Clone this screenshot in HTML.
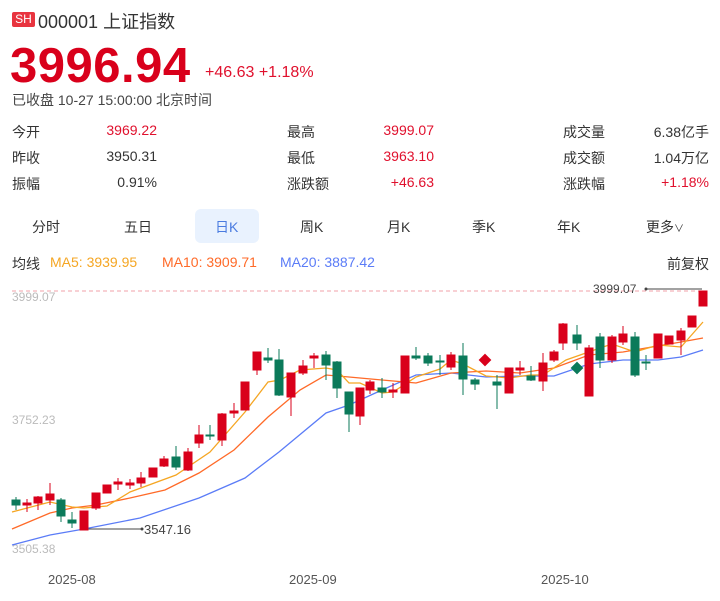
<!DOCTYPE html>
<html><head><meta charset="utf-8"><style>
*{margin:0;padding:0;box-sizing:border-box}
body{width:720px;height:601px;background:#fff;font-family:"Liberation Sans","Noto Sans CJK SC",sans-serif;color:#333;position:relative;overflow:hidden}
.a{position:absolute;white-space:nowrap}
.r{color:#e0102d}
.lab{font-size:14px;color:#333}
.val{font-size:14px;text-align:right}
</style></head><body>
<div class="a" style="left:12px;top:12px;width:23px;height:15px;background:#e8343f;border-radius:2px;color:#fff;font-size:12px;line-height:15px;text-align:center">SH</div>
<div class="a" style="left:38px;top:8px;font-size:18px;color:#333">000001 上证指数</div>
<div class="a" style="left:10px;top:38px;font-size:49px;font-weight:bold;color:#d9001b;letter-spacing:0.5px">3996.94</div>
<div class="a r" style="left:205px;top:64px;font-size:16px">+46.63 +1.18%</div>
<div class="a" style="left:12px;top:90px;font-size:14px;color:#444">已收盘 10-27 15:00:00 北京时间</div>

<div class="a lab" style="left:12px;top:122px">今开</div><div class="a val r" style="right:563px;top:122px">3969.22</div>
<div class="a lab" style="left:12px;top:148px">昨收</div><div class="a val" style="right:563px;top:148px">3950.31</div>
<div class="a lab" style="left:12px;top:174px">振幅</div><div class="a val" style="right:563px;top:174px">0.91%</div>
<div class="a lab" style="left:287px;top:122px">最高</div><div class="a val r" style="right:286px;top:122px">3999.07</div>
<div class="a lab" style="left:287px;top:148px">最低</div><div class="a val r" style="right:286px;top:148px">3963.10</div>
<div class="a lab" style="left:287px;top:174px">涨跌额</div><div class="a val r" style="right:286px;top:174px">+46.63</div>
<div class="a lab" style="left:563px;top:122px">成交量</div><div class="a val" style="right:11px;top:122px">6.38亿手</div>
<div class="a lab" style="left:563px;top:148px">成交额</div><div class="a val" style="right:11px;top:148px">1.04万亿</div>
<div class="a lab" style="left:563px;top:174px">涨跌幅</div><div class="a val r" style="right:11px;top:174px">+1.18%</div>

<div class="a" style="left:195px;top:209px;width:64px;height:34px;background:#e9f2fe;border-radius:6px"></div>
<div class="a" style="left:32px;top:217px;font-size:14px">分时</div>
<div class="a" style="left:124px;top:217px;font-size:14px">五日</div>
<div class="a" style="left:215px;top:217px;font-size:14px;color:#4a7be0">日K</div>
<div class="a" style="left:300px;top:217px;font-size:14px">周K</div>
<div class="a" style="left:387px;top:217px;font-size:14px">月K</div>
<div class="a" style="left:472px;top:217px;font-size:14px">季K</div>
<div class="a" style="left:557px;top:217px;font-size:14px">年K</div>
<div class="a" style="left:646px;top:217px;font-size:14px">更多<span style="font-size:10px">∨</span></div>

<div class="a" style="left:12px;top:254px;font-size:14px">均线</div>
<div class="a" style="left:50px;top:254px;font-size:14px;color:#f5a623">MA5: 3939.95</div>
<div class="a" style="left:162px;top:254px;font-size:14px;color:#ff6a28">MA10: 3909.71</div>
<div class="a" style="left:280px;top:254px;font-size:14px;color:#5b7cf7">MA20: 3887.42</div>
<div class="a" style="right:11px;top:254px;font-size:14px">前复权</div>

<svg class="a" style="left:0;top:0" width="720" height="601">
<line x1="12" y1="291" x2="700" y2="291" stroke="#f0a0a8" stroke-dasharray="4,3"/>
<g font-size="12" fill="#bbb" font-family="Liberation Sans"><text x="12" y="301">3999.07</text><text x="12" y="424">3752.23</text><text x="12" y="553">3505.38</text></g>
<line x1="645" y1="289" x2="702" y2="289" stroke="#444"/><circle cx="646" cy="289" r="1.5" fill="#444"/>
<text x="593" y="293" font-size="12" fill="#444">3999.07</text>
<line x1="84" y1="529" x2="142" y2="529" stroke="#444"/><circle cx="142" cy="529" r="1.5" fill="#444"/>
<text x="144" y="534" font-size="13" fill="#444">3547.16</text>
<g font-size="13" fill="#555"><text x="48" y="584">2025-08</text><text x="289" y="584">2025-09</text><text x="541" y="584">2025-10</text></g>
<polyline fill="none" stroke="#5b7cf7" stroke-width="1.3" points="12,545 50,535 84,529 140,518 199,498 245,478 279,452 326,413 349,405 382,390 416,375 451,373 486,377 520,376 554,376 589,364 623,360 658,360 681,357 703,350"/>
<polyline fill="none" stroke="#ff6a28" stroke-width="1.3" points="12,529 50,513 72,508 96,505 130,498 165,490 199,473 234,450 268,417 300,390 326,375 349,377 382,380 416,383 451,373 486,371 520,373 554,368 589,355 623,352 681,342 703,338"/>
<polyline fill="none" stroke="#f5a623" stroke-width="1.3" points="12,512 50,502 72,507 84,508 107,506 130,492 176,475 210,452 245,412 268,382 280,380 300,370 326,368 337,370 349,383 360,383 382,393 393,392 416,377 440,369 451,360 463,364 486,376 509,378 530,375 543,375 566,360 600,348 612,344 635,352 658,345 681,347 703,322"/>
<g stroke="#d9001b" fill="#d9001b" stroke-width="1">
<line x1="27" y1="499" x2="27" y2="512"/><rect x="23" y="503" width="8" height="2"/>
<line x1="38" y1="496" x2="38" y2="510"/><rect x="34" y="497" width="8" height="6"/>
<line x1="50" y1="483" x2="50" y2="505"/><rect x="46" y="494" width="8" height="6"/>
<rect x="80" y="511" width="8" height="19"/>
<line x1="96" y1="493" x2="96" y2="510"/><rect x="92" y="493" width="8" height="15"/>
<rect x="103" y="485" width="8" height="8"/>
<line x1="118" y1="478" x2="118" y2="490"/><rect x="114" y="482" width="8" height="2"/>
<line x1="130" y1="479" x2="130" y2="489"/><rect x="126" y="483" width="8" height="2"/>
<line x1="141" y1="472" x2="141" y2="487"/><rect x="137" y="478" width="8" height="5"/>
<rect x="149" y="468" width="8" height="9"/>
<line x1="164" y1="456" x2="164" y2="467"/><rect x="160" y="459" width="8" height="7"/>
<line x1="188" y1="448" x2="188" y2="471"/><rect x="184" y="452" width="8" height="18"/>
<line x1="199" y1="425" x2="199" y2="448"/><rect x="195" y="435" width="8" height="8"/>
<line x1="222" y1="413" x2="222" y2="446"/><rect x="218" y="414" width="8" height="26"/>
<line x1="234" y1="403" x2="234" y2="418"/><rect x="230" y="411" width="8" height="2"/>
<rect x="241" y="382" width="8" height="28"/>
<line x1="257" y1="352" x2="257" y2="375"/><rect x="253" y="352" width="8" height="18"/>
<line x1="291" y1="373" x2="291" y2="416"/><rect x="287" y="373" width="8" height="24"/>
<line x1="303" y1="360" x2="303" y2="375"/><rect x="299" y="366" width="8" height="7"/>
<line x1="314" y1="353" x2="314" y2="368"/><rect x="310" y="356" width="8" height="2"/>
<line x1="360" y1="388" x2="360" y2="425"/><rect x="356" y="388" width="8" height="28"/>
<line x1="370" y1="380" x2="370" y2="394"/><rect x="366" y="382" width="8" height="8"/>
<line x1="393" y1="383" x2="393" y2="398"/><rect x="389" y="390" width="8" height="2"/>
<rect x="401" y="356" width="8" height="37"/>
<line x1="451" y1="352" x2="451" y2="370"/><rect x="447" y="355" width="8" height="12"/>
<rect x="481" y="356" width="8" height="8" transform="rotate(45 485 360)"/>
<rect x="505" y="368" width="8" height="25"/>
<line x1="520" y1="361" x2="520" y2="375"/><rect x="516" y="368" width="8" height="2"/>
<line x1="543" y1="353" x2="543" y2="391"/><rect x="539" y="363" width="8" height="18"/>
<line x1="554" y1="350" x2="554" y2="362"/><rect x="550" y="352" width="8" height="8"/>
<line x1="563" y1="323" x2="563" y2="350"/><rect x="559" y="324" width="8" height="19"/>
<line x1="589" y1="345" x2="589" y2="396"/><rect x="585" y="348" width="8" height="48"/>
<line x1="612" y1="335" x2="612" y2="363"/><rect x="608" y="337" width="8" height="23"/>
<line x1="623" y1="326" x2="623" y2="345"/><rect x="619" y="334" width="8" height="8"/>
<rect x="654" y="334" width="8" height="24"/>
<rect x="665" y="336" width="8" height="8"/>
<line x1="681" y1="328" x2="681" y2="355"/><rect x="677" y="331" width="8" height="9"/>
<rect x="688" y="316" width="8" height="11"/>
<rect x="699" y="291" width="8" height="15"/>
</g>
<g stroke="#0b7a5a" fill="#0b7a5a" stroke-width="1">
<line x1="16" y1="497" x2="16" y2="510"/><rect x="12" y="500" width="8" height="5"/>
<line x1="61" y1="498" x2="61" y2="522"/><rect x="57" y="500" width="8" height="16"/>
<line x1="72" y1="512" x2="72" y2="528"/><rect x="68" y="520" width="8" height="3"/>
<line x1="176" y1="446" x2="176" y2="470"/><rect x="172" y="457" width="8" height="10"/>
<line x1="210" y1="425" x2="210" y2="440"/><rect x="206" y="435" width="8" height="1"/>
<line x1="268" y1="348" x2="268" y2="363"/><rect x="264" y="358" width="8" height="2"/>
<line x1="279" y1="349" x2="279" y2="396"/><rect x="275" y="360" width="8" height="35"/>
<line x1="326" y1="351" x2="326" y2="380"/><rect x="322" y="355" width="8" height="10"/>
<line x1="337" y1="361" x2="337" y2="398"/><rect x="333" y="362" width="8" height="26"/>
<line x1="349" y1="392" x2="349" y2="432"/><rect x="345" y="392" width="8" height="22"/>
<line x1="382" y1="378" x2="382" y2="398"/><rect x="378" y="388" width="8" height="4"/>
<line x1="416" y1="347" x2="416" y2="360"/><rect x="412" y="356" width="8" height="2"/>
<line x1="428" y1="353" x2="428" y2="366"/><rect x="424" y="356" width="8" height="7"/>
<line x1="440" y1="355" x2="440" y2="375"/><rect x="436" y="361" width="8" height="1"/>
<line x1="463" y1="343" x2="463" y2="395"/><rect x="459" y="356" width="8" height="23"/>
<line x1="475" y1="378" x2="475" y2="390"/><rect x="471" y="380" width="8" height="4"/>
<line x1="497" y1="375" x2="497" y2="409"/><rect x="493" y="382" width="8" height="3"/>
<line x1="531" y1="366" x2="531" y2="381"/><rect x="527" y="376" width="8" height="4"/>
<line x1="577" y1="325" x2="577" y2="350"/><rect x="573" y="335" width="8" height="8"/>
<rect x="573" y="364" width="8" height="8" transform="rotate(45 577 368)"/>
<line x1="600" y1="333" x2="600" y2="368"/><rect x="596" y="337" width="8" height="23"/>
<line x1="635" y1="332" x2="635" y2="377"/><rect x="631" y="337" width="8" height="38"/>
<line x1="646" y1="355" x2="646" y2="370"/><rect x="642" y="362" width="8" height="1"/>
</g>
</svg>
</body></html>
